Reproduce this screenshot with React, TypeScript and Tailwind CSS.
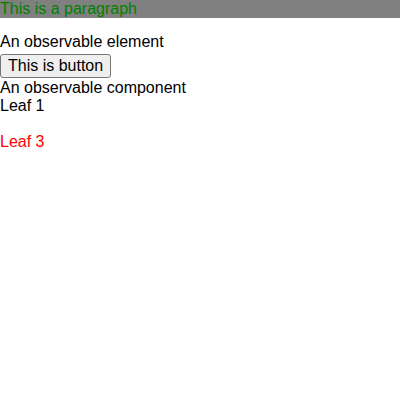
import React from 'react';

export default function App() {
  return (
    <div className="flex flex-col items-start font-['Liberation_Sans',Arial,sans-serif] text-base leading-[18px] text-black">
      <p className="self-stretch h-[18px] bg-[#808080] text-[#008000]">This is a paragraph</p>
      <div className="mt-[15px]">An observable element</div>
      {/* native-looking button */}
      <button className="mt-[3px] block rounded-[3px] border border-[#767676] bg-[#efefef] px-[7px] py-[2px] text-[16px] leading-[18px]">
        This is button
      </button>
      <div className="mt-[1px]">An observable component</div>
      <div>Leaf 1</div>
      <div className="h-[18px]" />
      <div className="text-[#ff0000]">Leaf 3</div>
    </div>
  );
}
